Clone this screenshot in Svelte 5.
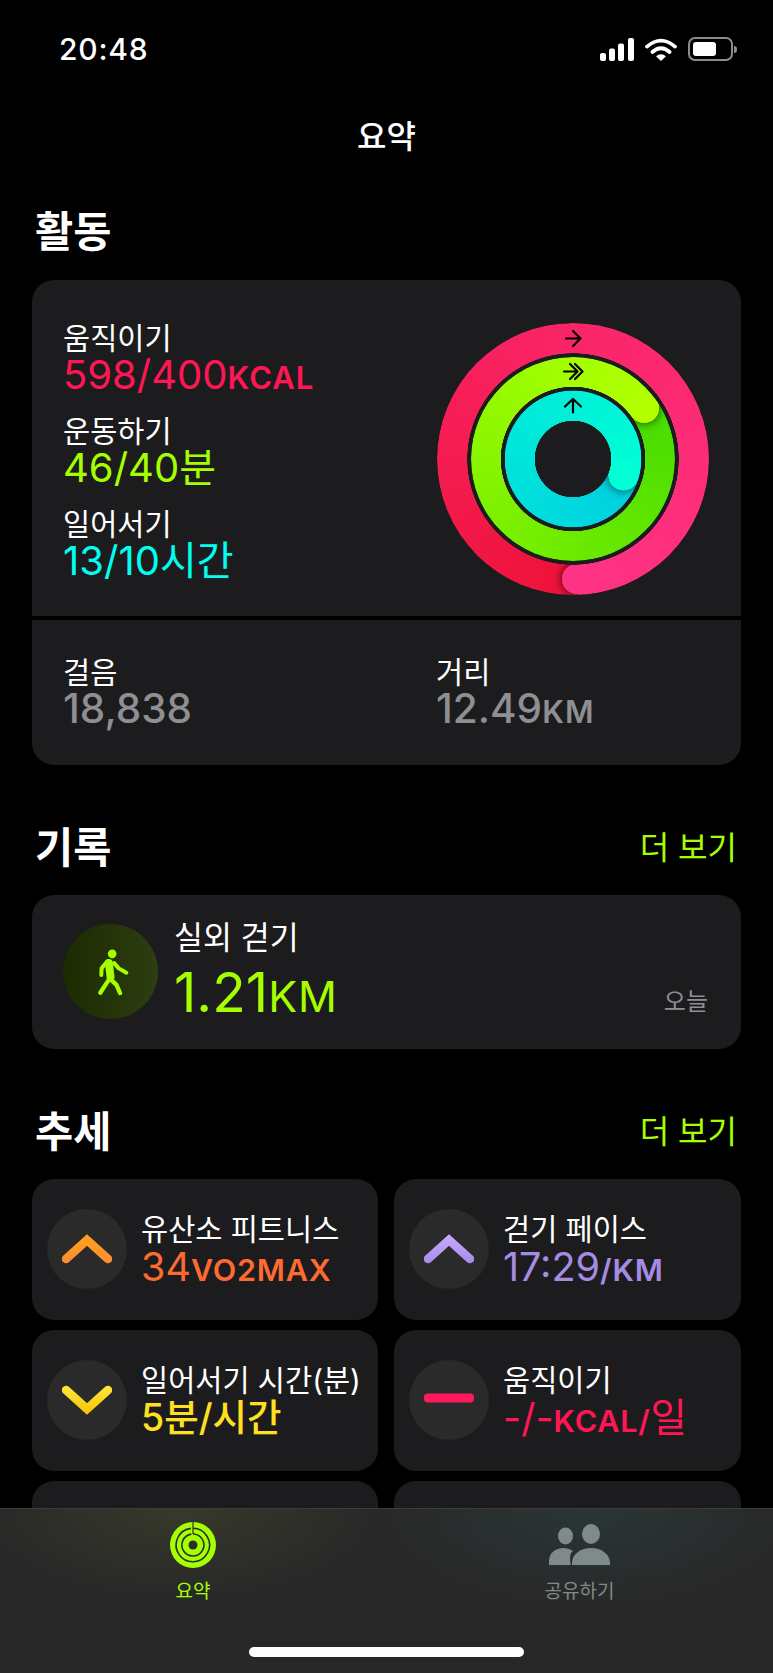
<script>
  const stats = [
    { label: '움직이기', value: '598/400', unit: 'KCAL', color: '#ff1654' },
    { label: '운동하기', value: '46/40', unit: '분', color: '#a6ff00', hangul: true },
    { label: '일어서기', value: '13/10', unit: '시간', color: '#00fff0', hangul: true }
  ];

  const totals = [
    { label: '걸음', value: '18,838', unit: '' },
    { label: '거리', value: '12.49', unit: 'KM' }
  ];

  const trends = [
    { label: '유산소 피트니스', value: '34', unit: 'VO2MAX', color: '#ff6a30', icon: 'up', from: '#ffa31f', to: '#ff8a2e' },
    { label: '걷기 페이스', value: '17:29', unit: '/KM', color: '#a58ce2', icon: 'up', from: '#c9aaff', to: '#a58ce8' },
    { label: '일어서기 시간(분)', value: '5분/시간', unit: '', color: '#ffe020', icon: 'down', from: '#ffe840', to: '#f5c400', tight: true },
    { label: '움직이기', value: '-/-', unit: 'KCAL/', tail: '일', color: '#ff1654', icon: 'flat', from: '#ff1a5e', to: '#ff1a5e' },
    { label: '', value: '', unit: '', icon: '' },
    { label: '', value: '', unit: '', icon: '' }
  ];

  // each ring: outer radius, hole radius, where the lap ends, and its colours
  const rings = [
    { outer: 136, hole: 105.5, angle: 178, head: ['#fa2568', '#ff3385'], tail: ['#ee1238', '#fa2568'] },
    { outer: 102, hole: 72, angle: 54.5, head: ['#a4ff00', '#b2ff00'], tail: ['#46dc00', '#a4ff00'] },
    { outer: 68.5, hole: 38, angle: 108, head: ['#00f0d8', '#00ffd5'], tail: ['#00cfe0', '#00f0d8'] }
  ];

  function ringStyle(r) {
    const size = r.outer * 2;
    return `width:${size}px;height:${size}px;` +
      `-webkit-mask:radial-gradient(closest-side,transparent ${r.hole}px,#000 ${r.hole + 0.5}px);` +
      `mask:radial-gradient(closest-side,transparent ${r.hole}px,#000 ${r.hole + 0.5}px);` +
      `background:conic-gradient(${r.tail[0]} 0deg ${r.angle}deg,${r.tail[1]} 360deg)`;
  }

  function headStyle(r) {
    return `background:conic-gradient(${r.head[0]} 0deg,${r.head[1]} ${r.angle}deg,transparent ${r.angle}deg)`;
  }

  function capStyle(r) {
    const w = r.outer - r.hole;
    const mid = (r.outer + r.hole) / 2;
    const a = (r.angle * Math.PI) / 180;
    const left = r.outer + mid * Math.sin(a) - w / 2;
    const top = r.outer - mid * Math.cos(a) - w / 2;
    return `width:${w}px;height:${w}px;left:${left}px;top:${top}px;background:${r.head[1]}`;
  }
</script>

<div class="phone">
  <header class="status">
    <span class="time">20:48</span>
    <div class="status-icons">
      <svg class="signal" width="34" height="23" viewBox="0 0 34 23">
        <rect x="0" y="15" width="6" height="8" rx="2" />
        <rect x="9" y="10.5" width="6" height="12.5" rx="2" />
        <rect x="18" y="5.5" width="6" height="17.5" rx="2" />
        <rect x="28" y="0" width="6" height="23" rx="2" />
      </svg>
      <svg class="wifi" width="32" height="23" viewBox="0 0 32 23">
        <path d="M2 8.6Q16-3.4 30 8.6" fill="none" stroke="#fff" stroke-width="3.8" stroke-linecap="round" />
        <path d="M7.4 14Q16 6.6 24.6 14" fill="none" stroke="#fff" stroke-width="3.8" stroke-linecap="round" />
        <path d="M11 18.2Q16 14.2 21 18.2L16 23Z" fill="#fff" />
      </svg>
      <div class="battery"><span class="battery-fill"></span></div>
      <span class="battery-cap"></span>
    </div>
  </header>

  <div class="nav-title">요약</div>

  <main class="content">
    <div class="section-head first"><h2>활동</h2></div>
    <section class="card activity">
      <div class="activity-top">
        <div class="stats">
          {#each stats as s}
            <div class="stat">
              <div class="label">{s.label}</div>
              <div class="value" style="color:{s.color}">{s.value}<span class:unit={!s.hangul}>{s.unit}</span></div>
            </div>
          {/each}
        </div>
        <div class="rings">
          {#each rings as r}
            <div class="ring" style={ringStyle(r)}>
              <div class="cap-shadow" style={capStyle(r)}></div>
              <div class="ring-head" style={headStyle(r)}></div>
              <div class="cap" style={capStyle(r)}></div>
            </div>
          {/each}
          <svg class="arrows" width="272" height="272" viewBox="437 322.5 272 272">
            <path d="M566 338H580M573 330.5L580.5 338L573 345.5" />
            <path d="M564 371H577M570 363.5L577.5 371L570 378.5M575 363.5L582.5 371L575 378.5" />
            <path d="M573 412V399M565 406L573 398.5L581 406" />
          </svg>
        </div>
      </div>
      <div class="activity-bottom">
        {#each totals as t}
          <div>
            <div class="label">{t.label}</div>
            <div class="value grey">{t.value}<span class="unit">{t.unit}</span></div>
          </div>
        {/each}
      </div>
    </section>

    <div class="section-head"><h2>기록</h2><span class="more">더 보기</span></div>
    <section class="card record">
      <div class="walk-icon">
        <svg width="33" height="50" viewBox="230 198 100 150" fill="none" stroke="#a6ff00" stroke-linecap="round" stroke-linejoin="round">
          <circle cx="276" cy="218" r="13" fill="#a6ff00" stroke="none" />
          <path d="M266 246L271 288" stroke-width="24" />
          <path d="M262 240L244 262L243 282" stroke-width="12" />
          <path d="M282 246L296 262L319 275" stroke-width="12" />
          <path d="M266 296L240 336" stroke-width="13" />
          <path d="M272 296L289 312L300 337" stroke-width="13" />
        </svg>
      </div>
      <div class="record-text">
        <div class="label big">실외 걷기</div>
        <div class="record-value">1.21<span class="record-unit">KM</span></div>
      </div>
      <span class="when">오늘</span>
    </section>

    <div class="section-head"><h2>추세</h2><span class="more">더 보기</span></div>
    <section class="trends">
      {#each trends as t, i}
        <div class="card trend">
          {#if t.icon}
            <div class="trend-icon">
              <svg width="50" height="30" viewBox="0 0 50 30" fill="none">
                <defs>
                  <linearGradient id="chevron-{i}" gradientUnits="userSpaceOnUse" x1="0" y1="0" x2="0" y2="30">
                    <stop offset="0" stop-color={t.from} />
                    <stop offset="1" stop-color={t.to} />
                  </linearGradient>
                </defs>
                {#if t.icon === 'up'}
                  <path d="M4 25L25 6L46 25" stroke="url(#chevron-{i})" stroke-width="8.5" stroke-linecap="round" />
                {:else if t.icon === 'down'}
                  <path d="M4 5L25 24L46 5" stroke="url(#chevron-{i})" stroke-width="8.5" stroke-linecap="round" />
                {:else}
                  <path d="M4 13H46" stroke={t.from} stroke-width="9" stroke-linecap="round" />
                {/if}
              </svg>
            </div>
            <div>
              <div class="label">{t.label}</div>
              <div class="value strong" class:tight={t.tight} style="color:{t.color}">{t.value}<span class="unit">{t.unit}</span>{t.tail ?? ''}</div>
            </div>
          {/if}
        </div>
      {/each}
    </section>
  </main>

  <nav class="tabbar">
    <div class="tab active">
      <svg width="46" height="46" viewBox="0 0 46 46">
        <circle cx="23" cy="23" r="23" fill="#a6ff00" />
        <g fill="none" stroke="#2d2f27" stroke-width="1.6">
          <path d="M23 6.3A16.7 16.7 0 1 1 21 6.4" />
          <path d="M23 12A11 11 0 1 1 21.4 12.1" />
          <path d="M23 0V7M23 7V12" stroke-width="1.2" />
        </g>
        <circle cx="23" cy="23" r="4.5" fill="#2d2f27" />
      </svg>
      <span>요약</span>
    </div>
    <div class="tab">
      <svg width="62" height="46" viewBox="0 0 62 46" fill="#7f8a8a">
        <ellipse cx="16.5" cy="14" rx="7.5" ry="8.5" />
        <ellipse cx="42" cy="12" rx="9" ry="10" />
        <path d="M0 43V39C0 31 7 26 14 26C18 26 21 27 24 29C19 32 22 43 22 43Z" />
        <path d="M23 43V41C23 32 32 26 42 26C52 26 61 32 61 41V43Z" />
      </svg>
      <span>공유하기</span>
    </div>
    <div class="home-bar"></div>
  </nav>
</div>

<style>
  :global(body) {
    margin: 0;
    background: #000;
  }

  .phone {
    position: relative;
    width: 773px;
    height: 1673px;
    overflow: hidden;
    background: #000;
    color: #fff;
    font-family: Inter, "Noto Sans CJK KR", sans-serif;
  }

  /* status bar */
  .status {
    height: 98px;
    display: flex;
    align-items: center;
    justify-content: space-between;
    padding: 0 36px 0 59px;
    box-sizing: border-box;
  }

  .time {
    font-size: 30px;
    font-weight: 500;
    letter-spacing: 0.8px;
  }

  .status-icons {
    display: flex;
    align-items: center;
  }

  .signal {
    fill: #fff;
    margin-right: 11px;
  }

  .wifi {
    margin-right: 11px;
  }

  .battery {
    width: 45px;
    height: 24px;
    box-sizing: border-box;
    border: 2px solid #8c8c8c;
    border-radius: 7px;
    padding: 3px;
  }

  .battery-fill {
    display: block;
    width: 23px;
    height: 100%;
    background: #fff;
    border-radius: 3px;
  }

  .battery-cap {
    width: 3px;
    height: 7px;
    margin-left: 1px;
    background: #8c8c8c;
    border-radius: 0 3px 3px 0;
  }

  .nav-title {
    height: 78px;
    line-height: 78px;
    text-align: center;
    font-size: 32px;
    font-weight: 500;
  }

  .content {
    padding: 0 32px;
  }

  .section-head {
    height: 60px;
    margin: 51px 0 19px;
    display: flex;
    align-items: center;
    justify-content: space-between;
    padding: 0 4px 2px 3px;
    box-sizing: border-box;
  }

  .section-head.first {
    margin-top: 24px;
    margin-bottom: 20px;
  }

  h2 {
    margin: 0;
    font-size: 41.5px;
    font-weight: 700;
  }

  .more {
    font-size: 32px;
    color: #a6ff00;
  }

  .card {
    background: #1c1c1e;
    border-radius: 22px;
  }

  .label {
    height: 36px;
    line-height: 36px;
    font-size: 29.5px;
    white-space: nowrap;
  }

  .label.big {
    font-size: 31.5px;
  }

  .value {
    height: 38px;
    line-height: 38px;
    font-size: 40px;
    white-space: nowrap;
  }

  .value.grey {
    color: #8e8e93;
    font-weight: 500;
    font-size: 40.5px;
  }

  .unit {
    font-size: 31px;
    font-weight: 600;
    letter-spacing: 1px;
  }

  /* activity card */
  .activity {
    height: 485px;
    overflow: hidden;
  }

  .activity-top {
    height: 340px;
    display: flex;
    justify-content: space-between;
    padding: 40px 32px 0 31px;
    box-sizing: border-box;
    border-bottom: 4px solid #000;
  }

  .stats {
    display: flex;
    flex-direction: column;
    gap: 19px;
  }

  .rings {
    position: relative;
    width: 272px;
    height: 272px;
    margin-top: 2.5px;
    flex-shrink: 0;
  }

  .ring {
    position: absolute;
    left: 50%;
    top: 50%;
    transform: translate(-50%, -50%);
    border-radius: 50%;
    overflow: hidden;
  }

  .ring-head {
    position: absolute;
    inset: 0;
  }

  .cap,
  .cap-shadow {
    position: absolute;
    border-radius: 50%;
  }

  .cap-shadow {
    box-shadow: 0 0 10px rgba(0, 0, 0, 0.75);
  }

  .arrows {
    position: absolute;
    left: 0;
    top: 0;
    fill: none;
    stroke: #000;
    stroke-width: 2.2;
    stroke-linecap: round;
    stroke-linejoin: round;
  }

  .activity-bottom {
    display: grid;
    grid-template-columns: 373px 1fr;
    padding: 34px 0 0 31px;
  }

  /* record card */
  .record {
    height: 154px;
    display: flex;
    align-items: flex-start;
    gap: 16px;
    padding: 29px 33px 30px 31px;
    box-sizing: border-box;
  }

  .walk-icon {
    width: 95px;
    height: 95px;
    padding-left: 6px;
    box-sizing: border-box;
    border-radius: 50%;
    background: linear-gradient(90deg, #1c2a00, #2d3e12);
    display: flex;
    align-items: center;
    justify-content: center;
    flex-shrink: 0;
  }

  .record-text {
    margin-top: -4px;
  }

  .record-value {
    height: 60px;
    line-height: 60px;
    margin-top: 6px;
    font-size: 55px;
    color: #a6ff00;
  }

  .record-unit {
    font-size: 43px;
    letter-spacing: 1px;
  }

  .when {
    margin-left: auto;
    align-self: flex-end;
    margin-bottom: 3px;
    line-height: 28px;
    font-size: 24px;
    color: #8e8e93;
  }

  /* trends */
  .trends {
    display: grid;
    grid-template-columns: 346px 347px;
    grid-auto-rows: 141px;
    gap: 10px 16px;
  }

  .trend {
    display: flex;
    align-items: center;
    gap: 14px;
    padding: 0 0 2px 15px;
    box-sizing: border-box;
  }

  .trend-icon {
    width: 80px;
    height: 80px;
    border-radius: 50%;
    background: #2a2a2a;
    display: flex;
    align-items: center;
    justify-content: center;
    flex-shrink: 0;
  }

  .value.strong {
    height: 40px;
    line-height: 40px;
    font-size: 39.5px;
    font-weight: 400;
  }

  .value.strong .unit {
    font-size: 30.5px;
    letter-spacing: 0.8px;
  }

  .value.tight {
    font-size: 37.5px;
    font-weight: 500;
  }

  /* tab bar */
  .tabbar {
    position: absolute;
    left: 0;
    right: 0;
    bottom: 0;
    height: 165px;
    box-sizing: border-box;
    border-top: 1px solid #3c3c3c;
    background:
      radial-gradient(ellipse 200px 90px at 180px 0, rgba(70, 75, 45, 0.5), transparent),
      radial-gradient(ellipse 210px 100px at 590px 0, rgba(45, 65, 65, 0.55), transparent),
      #282828;
    display: grid;
    grid-template-columns: 386px 387px;
  }

  .tab {
    display: flex;
    flex-direction: column;
    align-items: center;
    padding-top: 13px;
    font-size: 19px;
    color: #7f8a8a;
  }

  .tab span {
    margin-top: 11px;
    line-height: 26px;
  }

  .tab.active {
    color: #a6ff00;
  }

  .home-bar {
    position: absolute;
    left: 249px;
    bottom: 16px;
    width: 275px;
    height: 10px;
    border-radius: 5px;
    background: #fff;
  }
</style>
